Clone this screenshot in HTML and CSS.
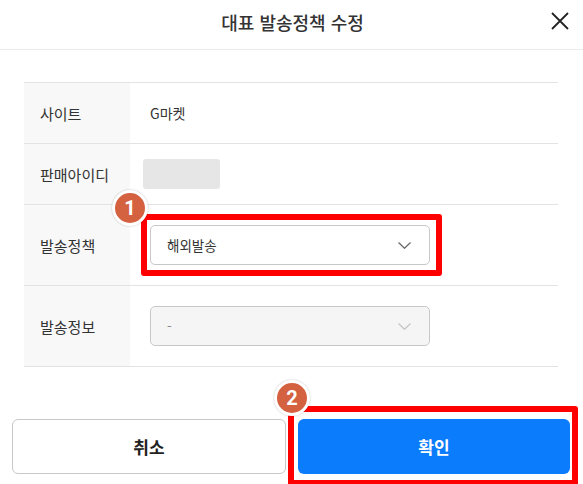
FILE: index.html
```html
<!DOCTYPE html>
<html lang="ko">
<head>
<meta charset="utf-8">
<link rel="stylesheet" href="styles.css">
</head>
<body>
<div class="modal">
  <header class="head">
    <h1 class="title">대표 발송정책 수정</h1>
    <button class="close" aria-label="닫기">
      <svg width="18" height="18" viewBox="0 0 18 18"><path d="M1 1L17 17M17 1L1 17" stroke="#222" stroke-width="1.8" fill="none"/></svg>
    </button>
  </header>
  <div class="body">
    <div class="table">
      <div class="row">
        <div class="label">사이트</div>
        <div class="value"><span class="site">G마켓</span></div>
      </div>
      <div class="row">
        <div class="label">판매아이디</div>
        <div class="value"><span class="masked"></span></div>
      </div>
      <div class="row tall">
        <div class="label">발송정책</div>
        <div class="value">
          <div class="select">
            <span>해외발송</span>
            <svg class="chev" width="13" height="7" viewBox="0 0 13 7"><path d="M0.5 0.5L6.5 6.3L12.5 0.5" stroke="#666" stroke-width="1.2" fill="none"/></svg>
          </div>
        </div>
      </div>
      <div class="row tall">
        <div class="label">발송정보</div>
        <div class="value">
          <div class="select disabled">
            <span>-</span>
            <svg class="chev" width="13" height="7" viewBox="0 0 13 7"><path d="M0.5 0.5L6.5 6.3L12.5 0.5" stroke="#c4c4c4" stroke-width="1.2" fill="none"/></svg>
          </div>
        </div>
      </div>
    </div>
  </div>
  <div class="actions">
    <button class="btn cancel">취소</button>
    <button class="btn confirm">확인</button>
  </div>
</div>
<div class="mark mark1"></div>
<div class="badge badge1">1</div>
<div class="mark mark2"></div>
<div class="badge badge2">2</div>
</body>
</html>
```
FILE: styles.css
```css
* { box-sizing: border-box; }
html, body { margin: 0; padding: 0; background: #fff; }
body {
  width: 583px;
  height: 484px;
  overflow: hidden;
  position: relative;
  font-family: "Noto Sans CJK KR", "Noto Sans", sans-serif;
  color: #333;
}
.modal { display: flex; flex-direction: column; }
.head {
  height: 50px;
  border-bottom: 1px solid #ebebeb;
  display: flex;
  align-items: center;
  justify-content: center;
  position: relative;
}
.title {
  margin: 0;
  font-size: 18px;
  font-weight: 500;
  color: #333;
  line-height: 1;
  margin-top: -6px;
  margin-left: 2px;
}
.close {
  position: absolute;
  right: 14px;
  top: 12px;
  width: 18px;
  height: 18px;
  padding: 0;
  border: 0;
  background: none;
  display: flex;
}
.body { padding: 32px 25px 0 24px; }
.table { border-top: 1px solid #e3e3e3; }
.row {
  display: flex;
  height: 61px;
  border-bottom: 1px solid #e3e3e3;
}
.row.tall { height: 81px; }
.label {
  width: 106px;
  background: #f8f8f8;
  display: flex;
  align-items: center;
  padding-left: 16px;
  font-size: 15px;
  color: #333;
}
.value {
  flex: 1;
  display: flex;
  align-items: center;
  padding-left: 20px;
}
.site { font-size: 14px; color: #333; }
.masked {
  display: block;
  width: 77px;
  height: 30px;
  margin-left: -7px;
  background: #e6e6e6;
  border-radius: 3px;
}
.select {
  width: 280px;
  height: 40px;
  border: 1px solid #c8c8c8;
  border-radius: 5px;
  display: flex;
  align-items: center;
  justify-content: space-between;
  padding: 0 18px 0 16px;
  font-size: 13.5px;
  color: #333;
  background: #fff;
}
.select.disabled { background: #f5f5f5; color: #888; }
.actions {
  display: flex;
  gap: 12px;
  padding: 0 13px 0 12px;
  margin-top: 52px;
}
.btn {
  flex: 1;
  height: 55px;
  border-radius: 6px;
  font-family: inherit;
  font-size: 17px;
  font-weight: 700;
}
.cancel { background: #fff; border: 1px solid #c8c8c8; color: #222; }
.confirm { background: #0a7cfc; border: 0; color: #fff; }
.mark {
  position: absolute;
  border: 6px solid #ff0000;
  border-radius: 3px;
}
.mark1 { left: 141px; top: 214px; width: 301px; height: 62px; }
.mark2 { left: 288px; top: 406px; width: 290px; height: 80px; }
.badge {
  position: absolute;
  width: 36px;
  height: 36px;
  border-radius: 50%;
  background: #d4613f;
  border: 3px solid #fff;
  box-shadow: 0 0 2px rgba(0,0,0,0.25);
  color: #fff;
  font-family: "Roboto", "Noto Sans", sans-serif;
  font-weight: 700;
  font-size: 20px;
  display: flex;
  align-items: center;
  justify-content: center;
  line-height: 1;
}
.badge1 { left: 112px; top: 190px; }
.badge2 { left: 274px; top: 380px; }
```
